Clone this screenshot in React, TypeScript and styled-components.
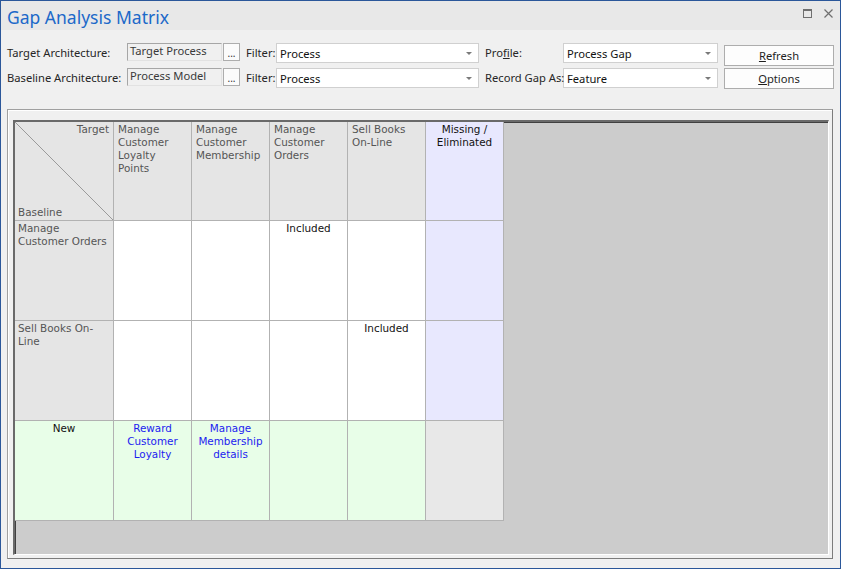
import React from 'react';
import styled, { createGlobalStyle } from 'styled-components';

const GlobalStyle = createGlobalStyle`
  html, body {
    margin: 0;
    padding: 0;
    background: #ffffff;
  }
`;

type CellKind =
  | 'corner'
  | 'colHead'
  | 'missingHead'
  | 'rowHead'
  | 'body'
  | 'missing'
  | 'newHead'
  | 'newCell'
  | 'end';

const CELL_BG: Record<CellKind, string> = {
  corner: '#e5e5e5',
  colHead: '#e5e5e5',
  missingHead: '#e8e8fe',
  rowHead: '#e5e5e5',
  body: '#ffffff',
  missing: '#e8e8fe',
  newHead: '#e8fee8',
  newCell: '#e8fee8',
  end: '#e8e8e8',
};

const columns = [
  'Manage Customer Loyalty Points',
  'Manage Customer Membership',
  'Manage Customer Orders',
  'Sell Books On-Line',
];

const rows = [
  { label: 'Manage Customer Orders', included: 2 },
  { label: 'Sell Books On-Line', included: 3 },
];

const newItems = ['Reward Customer Loyalty', 'Manage Membership details', '', ''];

const App = () => {
  return (
    <>
      <GlobalStyle />
      <Window>
        <TitleBar>
          <Title>Gap Analysis Matrix</Title>
          <WindowControls>
            <svg width="9" height="9" viewBox="0 0 9 9">
              <rect x="0.5" y="0.5" width="8" height="8" fill="none" stroke="#6f6f6f" />
              <line x1="0" y1="1.5" x2="9" y2="1.5" stroke="#6f6f6f" />
            </svg>
            <svg width="9" height="9" viewBox="0 0 9 9">
              <path d="M0.5 0.5 L8.5 8.5 M8.5 0.5 L0.5 8.5" stroke="#6f6f6f" strokeWidth="1.2" />
            </svg>
          </WindowControls>
        </TitleBar>

        <Toolbar>
          <Label>Target Architecture:</Label>
          <ReadOnlyField>Target Process</ReadOnlyField>
          <EllipsisButton>...</EllipsisButton>
          <Label $lead>Filter:</Label>
          <Select>
            <span>Process</span>
            <Caret />
          </Select>
          <Label $lead>
            Pro<u>f</u>ile:
          </Label>
          <Select>
            <span>Process Gap</span>
            <Caret />
          </Select>
          <ButtonCell>
            <PushButton $offset={2}>
              <u>R</u>efresh
            </PushButton>
          </ButtonCell>

          <Label>Baseline Architecture:</Label>
          <ReadOnlyField>Process Model</ReadOnlyField>
          <EllipsisButton>...</EllipsisButton>
          <Label $lead>Filter:</Label>
          <Select>
            <span>Process</span>
            <Caret />
          </Select>
          <Label $lead>Record Gap As:</Label>
          <Select>
            <span>Feature</span>
            <Caret />
          </Select>
          <ButtonCell>
            <PushButton $offset={0}>
              <u>O</u>ptions
            </PushButton>
          </ButtonCell>
        </Toolbar>

        <Panel>
          <Viewport>
            <Matrix>
              <Cell $kind="corner">
                <Diagonal viewBox="0 0 98 98" preserveAspectRatio="none">
                  <line x1="0" y1="0" x2="98" y2="98" stroke="#9a9a9a" strokeWidth="1" />
                </Diagonal>
                <CornerTarget>Target</CornerTarget>
                <CornerBaseline>Baseline</CornerBaseline>
              </Cell>
              {columns.map(c => (
                <Cell key={c} $kind="colHead">
                  {c}
                </Cell>
              ))}
              <Cell $kind="missingHead">Missing / Eliminated</Cell>

              {rows.map(r => (
                <React.Fragment key={r.label}>
                  <Cell $kind="rowHead">{r.label}</Cell>
                  {columns.map((c, i) => (
                    <Cell key={c} $kind="body">
                      {i === r.included ? 'Included' : ''}
                    </Cell>
                  ))}
                  <Cell $kind="missing" />
                </React.Fragment>
              ))}

              <Cell $kind="newHead">New</Cell>
              {newItems.map((n, i) => (
                <Cell key={i} $kind="newCell">
                  {n && <ElementLink>{n}</ElementLink>}
                </Cell>
              ))}
              <Cell $kind="end" />
            </Matrix>
          </Viewport>
        </Panel>
      </Window>
    </>
  );
};

const Window = styled.div`
  width: 841px;
  height: 569px;
  box-sizing: border-box;
  border: 1px solid #2b579a;
  background: #f0f0f0;
  display: flex;
  flex-direction: column;
  font-family: 'Noto Sans', 'Liberation Sans', sans-serif;
  color: #1f1f1f;
  overflow: hidden;
`;

const TitleBar = styled.div`
  height: 29px;
  flex: none;
  background: #e8e8e8;
  display: flex;
  align-items: center;
  padding: 0 7px 0 6px;
`;

const Title = styled.h1`
  margin: 0;
  margin-top: 2px;
  font-size: 17.5px;
  font-weight: 400;
  color: #1c69c9;
`;

const WindowControls = styled.div`
  margin-left: auto;
  display: flex;
  align-items: center;
  gap: 12px;
  margin-top: -5px;
`;

const Toolbar = styled.div`
  display: grid;
  grid-template-columns: 120px 96px 17px 36px 203px 84px 155px 116px;
  grid-template-rows: 20px 20px;
  row-gap: 5px;
  margin: 13px 0 0 6px;
  font-size: 11.2px;
  align-items: start;
`;

const Label = styled.div<{ $lead?: boolean }>`
  position: relative;
  z-index: 1;
  height: 20px;
  line-height: 19px;
  padding-left: ${p => (p.$lead ? '6px' : '0')};
  white-space: nowrap;
  color: #262626;
  u {
    text-decoration-thickness: 1px;
  }
`;

const ReadOnlyField = styled.div`
  width: 95px;
  height: 18px;
  box-sizing: border-box;
  border: 1px solid #a6a6a6;
  border-right-color: #e2e2e2;
  border-bottom-color: #e2e2e2;
  background: #f0f0f0;
  padding: 0 2px;
  line-height: 14px;
  color: #3a3a3a;
  white-space: nowrap;
  overflow: hidden;
`;

const EllipsisButton = styled.div`
  width: 17px;
  height: 18px;
  box-sizing: border-box;
  border: 1px solid #adadad;
  background: #fbfbfb;
  font-size: 10px;
  line-height: 18px;
  text-align: center;
  color: #333;
`;

const Select = styled.div`
  height: 20px;
  box-sizing: border-box;
  border: 1px solid #d0d0d0;
  background: #ffffff;
  display: flex;
  align-items: center;
  padding: 1px 0 0 3px;
  color: #111;
  span {
    flex: 1;
  }
`;

const Caret = styled.i`
  width: 0;
  height: 0;
  margin-right: 6px;
  border-left: 3px solid transparent;
  border-right: 3px solid transparent;
  border-top: 3px solid #7a7a7a;
`;

const ButtonCell = styled.div`
  padding-left: 6px;
`;

const PushButton = styled.div<{ $offset: number }>`
  margin-top: ${p => p.$offset}px;
  height: 21px;
  box-sizing: border-box;
  border: 1px solid #adadad;
  background: #fdfdfd;
  line-height: 19px;
  text-align: center;
  color: #1f1f1f;
`;

const Panel = styled.div`
  margin: 21px 0 0 6px;
  width: 826px;
  height: 450px;
  box-sizing: border-box;
  border: 1px solid #a0a0a0;
  border-right-color: #7c7c7c;
  border-bottom-color: #7c7c7c;
  box-shadow: inset 1px 1px 0 #ffffff;
  padding: 10px 3px 3px 5px;
`;

const Viewport = styled.div`
  width: 816px;
  height: 435px;
  box-sizing: border-box;
  background: #cccccc;
  border-top: 2px solid #6a6a6a;
  border-left: 2px solid #6a6a6a;
  border-right: 1px solid #ffffff;
  border-bottom: 1px solid #ffffff;
  box-shadow: inset 1px 1px 0 #404040;
  overflow: hidden;
`;

const Matrix = styled.div`
  display: grid;
  grid-template-columns: 99px repeat(5, 78px);
  grid-template-rows: 99px repeat(3, 100px);
  font-family: 'DejaVu Sans', Verdana, sans-serif;
  font-size: 10.4px;
  line-height: 13px;
`;

const Cell = styled.div<{ $kind: CellKind }>`
  position: relative;
  box-sizing: border-box;
  border-right: 1px solid #b2b2b2;
  border-bottom: 1px solid #b2b2b2;
  background: ${p => CELL_BG[p.$kind]};
  padding: 1px ${p => (p.$kind === 'rowHead' ? '3px' : '4px')};
  color: ${p =>
    p.$kind === 'colHead' || p.$kind === 'rowHead' ? '#555555' : '#111111'};
  text-align: ${p =>
    p.$kind === 'colHead' || p.$kind === 'rowHead' || p.$kind === 'corner'
      ? 'left'
      : 'center'};
  overflow: hidden;
`;

const Diagonal = styled.svg`
  position: absolute;
  left: 0;
  top: 0;
  width: 98px;
  height: 98px;
`;

const CornerTarget = styled.div`
  position: absolute;
  right: 4px;
  top: 1px;
  color: #555555;
`;

const CornerBaseline = styled.div`
  position: absolute;
  left: 3px;
  bottom: 1px;
  color: #555555;
`;

const ElementLink = styled.span`
  color: #1c1cf0;
`;

export default App;
